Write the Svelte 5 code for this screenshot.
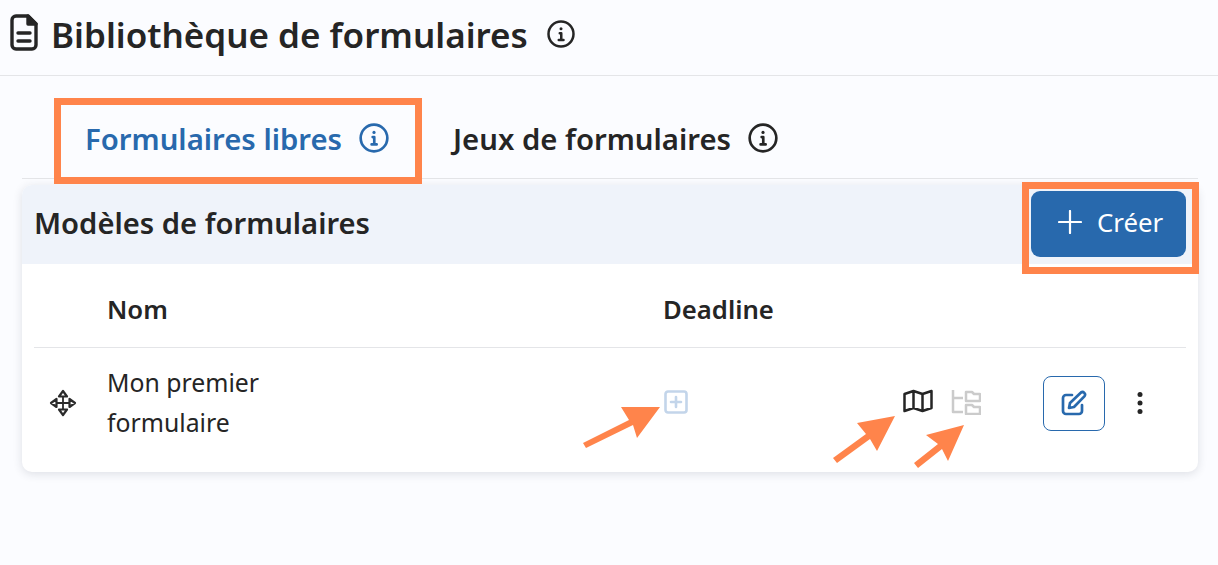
<script>
  const infoPath = 'M11 11.3h1.2v5.2M10.2 16.8h3.8'
</script>

<div class="page">
  <header class="top">
    <svg class="doc" viewBox="0 0 28 37" width="28" height="37" fill="none" stroke="#252525" stroke-width="3.4" stroke-linejoin="round" stroke-linecap="round">
      <path d="M18 2H6a4 4 0 0 0-4 4v25a4 4 0 0 0 4 4h16a4 4 0 0 0 4-4V10z" />
      <path d="M18 2v8h8z" fill="#252525" />
      <path d="M8 19h12M8 27h12" />
    </svg>
    <h1>Bibliothèque de formulaires</h1>
    <svg viewBox="0 0 24 24" width="30" height="30" fill="none" stroke="#252525" stroke-width="2" stroke-linecap="round" stroke-linejoin="round">
      <circle cx="12" cy="12" r="10" /><circle cx="12" cy="7.8" r="1.2" fill="#252525" stroke="none" /><path d={infoPath} />
    </svg>
  </header>

  <nav class="tabs">
    <div class="tab active">
      <span>Formulaires libres</span>
      <svg viewBox="0 0 24 24" width="32" height="32" fill="none" stroke="#2869ad" stroke-width="2" stroke-linecap="round" stroke-linejoin="round">
        <circle cx="12" cy="12" r="10" /><circle cx="12" cy="7.8" r="1.2" fill="#2869ad" stroke="none" /><path d={infoPath} />
      </svg>
    </div>
    <div class="tab">
      <span>Jeux de formulaires</span>
      <svg viewBox="0 0 24 24" width="32" height="32" fill="none" stroke="#252525" stroke-width="2" stroke-linecap="round" stroke-linejoin="round">
        <circle cx="12" cy="12" r="10" /><circle cx="12" cy="7.8" r="1.2" fill="#252525" stroke="none" /><path d={infoPath} />
      </svg>
    </div>
  </nav>

  <section class="card">
    <div class="card-head">
      <h2>Modèles de formulaires</h2>
      <button class="create">
        <svg viewBox="0 0 24 24" width="24" height="24" fill="none" stroke="#fff" stroke-width="2.2" stroke-linecap="round"><path d="M12 1v22M1 12h22" /></svg>
        <span>Créer</span>
      </button>
    </div>

    <div class="table">
      <div class="row head">
        <div></div>
        <div>Nom</div>
        <div>Deadline</div>
      </div>
      <div class="row body">
        <svg class="move" viewBox="0 0 28 28" width="28" height="28" fill="none" stroke="#2b2b2b" stroke-width="2.2" stroke-linejoin="round">
          <path d="M14 8v12M8 14h12" stroke-width="1.8" />
          <path d="M14 2l4 5.5h-8zM14 26l4-5.5h-8zM2 14l5.5-4v8zM26 14l-5.5-4v8z" />
        </svg>
        <div class="name">Mon premier<br />formulaire</div>
        <div class="deadline">
          <svg viewBox="0 0 24 24" width="24" height="24" fill="none" stroke="#c3d5ea" stroke-width="2.6" stroke-linecap="round">
            <rect x="1.5" y="1.5" width="21" height="21" rx="2.5" /><path d="M12 7v10M7 12h10" />
          </svg>
        </div>
        <div class="tools">
          <svg viewBox="0 0 30 24" width="30" height="24" fill="none" stroke="#252525" stroke-width="2.5" stroke-linejoin="round">
            <path d="M1.5 5l9-3 9 3 9-3v17l-9 3-9-3-9 3zM10.5 2v17M19.5 5v17" />
          </svg>
          <svg viewBox="0 0 30 26" width="30" height="26" fill="none" stroke="#cbcbcb" stroke-width="2.5" stroke-linejoin="round">
            <path d="M2 1v22h10M2 9h10" />
            <path d="M15 3h6l2 2h6v7H15zM15 16h6l2 2h6v7H15z" />
          </svg>
        </div>
        <button class="edit" aria-label="Modifier">
          <svg viewBox="0 0 26 26" width="26" height="26" fill="none" stroke="#2869ad" stroke-width="2.7" stroke-linecap="round" stroke-linejoin="round">
            <path d="M11 5H5a3 3 0 0 0-3 3v13a3 3 0 0 0 3 3h13a3 3 0 0 0 3-3v-6" />
            <path d="M8 18l1-5L20 2.5a2.6 2.6 0 0 1 3.6 3.6L13 17z" />
          </svg>
        </button>
        <svg class="dots" viewBox="0 0 6 24" width="6" height="24" fill="#252525">
          <circle cx="3" cy="3.5" r="2.5" /><circle cx="3" cy="12" r="2.5" /><circle cx="3" cy="20.5" r="2.5" />
        </svg>
      </div>
    </div>
  </section>

  <!-- annotations drawn on top of the screenshot -->
  <svg class="marks" viewBox="0 0 1218 565" width="1218" height="565">
    <g fill="none" stroke="#ff844b" stroke-width="7">
      <rect x="57.5" y="101.5" width="361" height="79" />
      <rect x="1025.5" y="185.5" width="170" height="85" />
    </g>
    <g fill="#ff844b">
      <polygon points="660,407 621,407 629,420 583,443 586,448 633,425 637,438" />
      <polygon points="895,416 857,423 866,434 833,458 837,463 870,439 877,451" />
      <polygon points="964,425 926,435 938,444 914,463 918,468 942,449 948,461" />
    </g>
  </svg>
</div>

<style>
  :global(body) {
    margin: 0;
    background: #fbfcff;
  }

  .page {
    position: relative;
    width: 1218px;
    height: 565px;
    overflow: hidden;
    font-family: "Noto Sans", "Open Sans", sans-serif;
    color: #252525;
  }

  .top {
    display: flex;
    align-items: center;
    height: 68px;
    padding: 0 0 7px 10px;
    border-bottom: 1px solid #e4e5e8;
  }

  .doc {
    margin-top: -3px;
  }

  h1 {
    margin: 0 18px 0 13px;
    font-size: 35px;
    font-weight: 600;
  }

  .tabs {
    display: flex;
    height: 102px;
    margin: 0 20px 0 22px;
    padding-left: 40px;
    border-bottom: 1px solid #e4e5e8;
  }

  .tab {
    display: flex;
    align-items: center;
    gap: 16px;
    height: 100%;
    padding: 24px 23px 0;
    box-sizing: border-box;
    font-size: 29.3px;
    font-weight: 600;
  }

  .tab.active {
    color: #2869ad;
    margin-right: 17px;
  }

  .tab svg {
    margin-top: -3px;
  }

  .card {
    margin: 6px 20px 0 22px;
    height: 287px;
    background: #fff;
    border-radius: 10px;
    box-shadow: 0 2px 10px rgba(40, 50, 70, 0.14);
  }

  .card-head {
    display: flex;
    align-items: center;
    justify-content: space-between;
    height: 79px;
    padding: 0 12px;
    background: #eff3fa;
    border-radius: 10px 10px 0 0;
  }

  h2 {
    margin: 0 0 4px;
    font-size: 29.2px;
    font-weight: 600;
  }

  .create {
    display: flex;
    align-items: center;
    gap: 15px;
    width: 155px;
    height: 66px;
    margin-bottom: 1px;
    padding: 0 0 4px 27px;
    background: #2869ad;
    border: 0;
    border-radius: 9px;
    color: #fff;
    font: 400 25.8px "Noto Sans", sans-serif;
  }

  .table {
    padding: 0 12px;
  }

  .row {
    display: grid;
    grid-template-columns: 73px 556px 241px 139px 74px 1fr;
    align-items: center;
  }

  .row.head {
    height: 75px;
    padding-top: 8px;
    border-bottom: 1px solid #e4e5e8;
    font-size: 25.7px;
    font-weight: 600;
  }

  .row.body {
    height: 110px;
    font-size: 24.8px;
  }

  .move {
    margin-left: 15px;
  }

  .name {
    line-height: 40px;
    margin-top: -2px;
  }

  .deadline {
    display: flex;
    padding-left: 1px;
    margin-top: -2px;
  }

  .tools {
    display: flex;
    gap: 18px;
    margin-top: -2px;
    margin-left: -1px;
  }

  .edit {
    display: flex;
    align-items: center;
    justify-content: center;
    width: 62px;
    height: 55px;
    padding: 0;
    background: #fff;
    border: 1.5px solid #2869ad;
    border-radius: 8px;
  }

  .dots {
    margin-left: 20px;
  }

  .marks {
    position: absolute;
    left: 0;
    top: 0;
    pointer-events: none;
  }
</style>
